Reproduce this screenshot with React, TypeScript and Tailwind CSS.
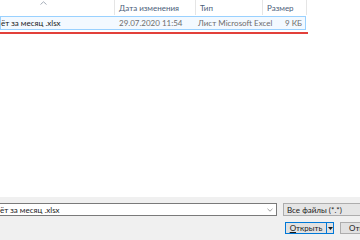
import React from 'react';

const cols = [
  { label: '', w: 'w-[115px]' },
  { label: 'Дата изменения', w: 'w-[81px]' },
  { label: 'Тип', w: 'w-[67px]' },
  { label: 'Размер', w: 'w-[44px]' },
];

const App: React.FC = () => {
  return (
    <div className="w-[360px] h-[240px] bg-white flex flex-col overflow-hidden font-['Lato',sans-serif] text-[8px] leading-none">
      {/* Column header */}
      <div className="relative h-[15px] flex shrink-0">
        {cols.map((c, i) => (
          <div
            key={i}
            className={`${c.w} h-full border-r border-[#e5e5e5] flex items-center ${i === 0 ? '' : 'pl-[4px]'} text-[#4c607a]`}
          >
            {c.label}
          </div>
        ))}
        <svg className="absolute left-[40px] top-[1px]" width="7" height="4" viewBox="0 0 7 4">
          <path d="M0.5 3.5 L3.5 0.8 L6.5 3.5" fill="none" stroke="#9aa4b0" strokeWidth="0.9" />
        </svg>
      </div>

      {/* Selected file row */}
      <div className="mt-[1px] w-[306px] h-[14px] border border-[#99d1ff] bg-[#f3f9ff] flex items-center shrink-0">
        <div className="w-[114px] text-[#1a1a1a] whitespace-nowrap">ёт за месяц .xlsx</div>
        <div className="w-[81px] pl-[4px] text-[#6d6d6d] whitespace-nowrap">29.07.2020 11:54</div>
        <div className="w-[67px] pl-[2px] text-[#6d6d6d] whitespace-nowrap">Лист Microsoft Excel</div>
        <div className="flex-1 pr-[3px] text-right text-[#6d6d6d]">9 КБ</div>
      </div>

      {/* Red underline */}
      <div className="mt-[2px] w-[308px] h-[2px] bg-[#e2403a] shrink-0" />

      <div className="flex-1" />

      {/* Footer */}
      <div className="h-[43px] bg-[#f0f0f0] shrink-0 pt-[6px] flex flex-col">
        <div className="flex items-center">
          <div className="w-[277px] h-[13px] bg-white border border-[#7a7a7a] border-l-0 flex items-center justify-between pr-[3px]">
            <span className="text-[#1a1a1a] whitespace-nowrap">ёт за месяц .xlsx</span>
            <svg width="6" height="4" viewBox="0 0 6 4">
              <path d="M0.5 0.8 L3 3.2 L5.5 0.8" fill="none" stroke="#888" strokeWidth="0.8" />
            </svg>
          </div>
          <div className="ml-[6px] flex-1 h-[13px] bg-[#e5e5e5] border border-[#adadad] border-r-0 flex items-center pl-[3px] text-[#1a1a1a] whitespace-nowrap">
            Все файлы (*.*)
          </div>
        </div>
        <div className="mt-[6px] flex items-center">
          <div className="ml-[285px] h-[12px] flex border border-[#0078d7] bg-[#e1e1e1]">
            <div className="w-[40px] flex items-center justify-center text-[#1a1a1a]">
              <span><span className="underline">О</span>ткрыть</span>
            </div>
            <div className="w-[7px] border-l border-[#0078d7] flex items-center justify-center">
              <svg width="5" height="3" viewBox="0 0 5 3">
                <path d="M0 0 L5 0 L2.5 3 Z" fill="#1a1a1a" />
              </svg>
            </div>
          </div>
          <div className="ml-[6px] flex-1 h-[12px] border border-[#adadad] border-r-0 bg-[#e1e1e1] flex items-center pl-[8px] text-[#1a1a1a] whitespace-nowrap overflow-hidden">
            Отмена
          </div>
        </div>
      </div>
    </div>
  );
};

export default App;
